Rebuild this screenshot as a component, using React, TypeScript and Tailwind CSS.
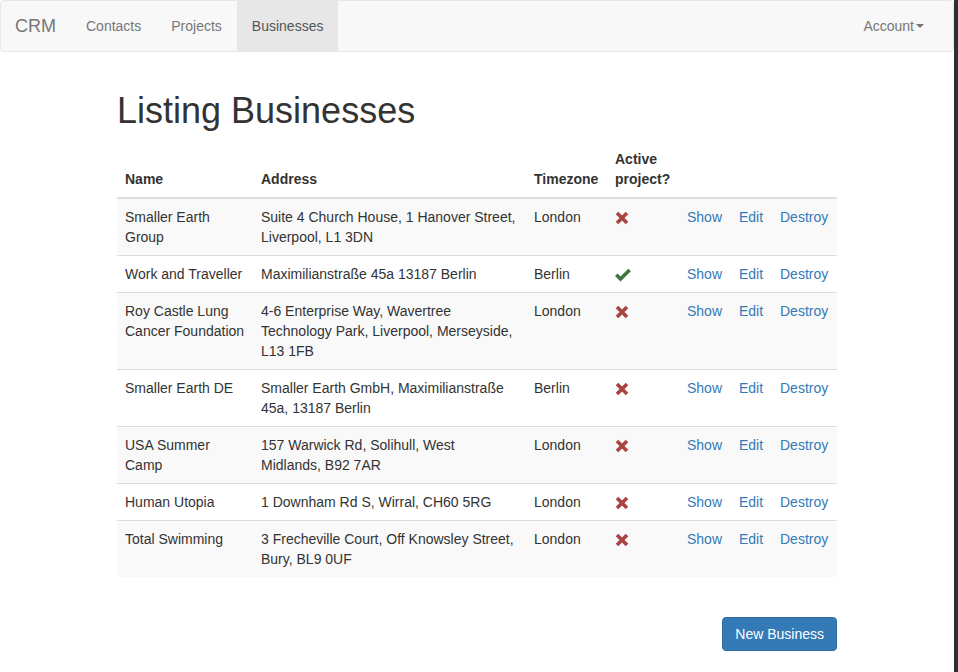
import React from "react";

const rows = [
  { name: "Smaller Earth Group", address: "Suite 4 Church House, 1 Hanover Street, Liverpool, L1 3DN", tz: "London", active: false },
  { name: "Work and Traveller", address: "Maximilianstraße 45a 13187 Berlin", tz: "Berlin", active: true },
  { name: "Roy Castle Lung Cancer Foundation", address: "4-6 Enterprise Way, Wavertree Technology Park, Liverpool, Merseyside, L13 1FB", tz: "London", active: false },
  { name: "Smaller Earth DE", address: "Smaller Earth GmbH, Maximilianstraße 45a, 13187 Berlin", tz: "Berlin", active: false },
  { name: "USA Summer Camp", address: "157 Warwick Rd, Solihull, West Midlands, B92 7AR", tz: "London", active: false },
  { name: "Human Utopia", address: "1 Downham Rd S, Wirral, CH60 5RG", tz: "London", active: false },
  { name: "Total Swimming", address: "3 Frecheville Court, Off Knowsley Street, Bury, BL9 0UF", tz: "London", active: false },
];

function RemoveIcon() {
  return (
    <svg width="14" height="14" viewBox="0 0 14 14" className="inline-block relative top-[3px]">
      <path d="M2 2 L12 12 M12 2 L2 12" stroke="#a94442" strokeWidth="3.6" strokeLinecap="butt" fill="none" />
    </svg>
  );
}

function OkIcon() {
  return (
    <svg width="16" height="14" viewBox="0 0 16 14" className="inline-block relative top-[3px]">
      <path d="M1.3 6.8 L5.5 11 L14.6 1.9" stroke="#3c763d" strokeWidth="3.6" strokeLinecap="butt" strokeLinejoin="miter" fill="none" />
    </svg>
  );
}

export default function App() {
  return (
    <div className="flex min-h-screen bg-white text-[14px] leading-[20px] text-[#333]" style={{ fontFamily: '"Liberation Sans", Arial, Helvetica, sans-serif' }}>
      <div className="w-[954px] shrink-0">
        <nav className="h-[52px] bg-[#f8f8f8] border border-[#e7e7e7] rounded-[4px] flex items-stretch">
          <a className="ml-[-1px] px-[15px] py-[15px] text-[18px] leading-[20px] text-[#777] h-[50px]">CRM</a>
          <a className="px-[15px] py-[15px] text-[#777] h-[50px]">Contacts</a>
          <a className="px-[15px] py-[15px] text-[#777] h-[50px]">Projects</a>
          <a className="px-[15px] py-[15px] text-[#555] bg-[#e7e7e7] h-[50px]">Businesses</a>
          <div className="flex-1" />
          <a className="px-[15px] py-[15px] text-[#777] h-[50px] mr-[14px] flex items-center">
            Account
            <span className="ml-[2px] inline-block w-0 h-0 border-t-[4px] border-t-[#777] border-x-[4px] border-x-transparent" />
          </a>
        </nav>

        <div className="w-[720px] mx-auto pt-[19px]">
          <h1 className="mt-[20px] mb-[10px] text-[36px] leading-[39.6px] font-normal text-[#333]">Listing Businesses</h1>

          <table className="w-[720px] table-fixed border-collapse mb-[20px]">
            <colgroup>
              <col className="w-[136px]" />
              <col className="w-[273px]" />
              <col className="w-[81px]" />
              <col className="w-[72px]" />
              <col className="w-[52px]" />
              <col className="w-[41px]" />
              <col className="w-[65px]" />
            </colgroup>
            <thead>
              <tr>
                <th className="p-[8px] text-left align-bottom font-bold border-b-2 border-[#ddd]">Name</th>
                <th className="p-[8px] text-left align-bottom font-bold border-b-2 border-[#ddd]">Address</th>
                <th className="p-[8px] text-left align-bottom font-bold border-b-2 border-[#ddd]">Timezone</th>
                <th className="p-[8px] text-left align-bottom font-bold border-b-2 border-[#ddd]">Active project?</th>
                <th className="p-[8px] border-b-2 border-[#ddd]"></th>
                <th className="p-[8px] border-b-2 border-[#ddd]"></th>
                <th className="p-[8px] border-b-2 border-[#ddd]"></th>
              </tr>
            </thead>
            <tbody>
              {rows.map((r, i) => (
                <tr key={i} className={i % 2 === 0 ? "bg-[#f9f9f9]" : "bg-white"}>
                  <td className={"p-[8px] align-top " + (i > 0 ? "border-t border-[#ddd]" : "")}>{r.name}</td>
                  <td className={"p-[8px] align-top " + (i > 0 ? "border-t border-[#ddd]" : "")}>{r.address}</td>
                  <td className={"p-[8px] align-top " + (i > 0 ? "border-t border-[#ddd]" : "")}>{r.tz}</td>
                  <td className={"p-[8px] align-top leading-[14px] " + (i > 0 ? "border-t border-[#ddd]" : "")}>{r.active ? <OkIcon /> : <RemoveIcon />}</td>
                  <td className={"p-[8px] align-top text-[#337ab7] " + (i > 0 ? "border-t border-[#ddd]" : "")}>Show</td>
                  <td className={"p-[8px] align-top text-[#337ab7] " + (i > 0 ? "border-t border-[#ddd]" : "")}>Edit</td>
                  <td className={"p-[8px] align-top text-[#337ab7] " + (i > 0 ? "border-t border-[#ddd]" : "")}>Destroy</td>
                </tr>
              ))}
            </tbody>
          </table>

          <div className="flex justify-end pt-[20px]">
            <button className="px-[12px] py-[6px] bg-[#337ab7] border border-[#2e6da4] rounded-[4px] text-white text-[14px] leading-[20px]">New Business</button>
          </div>
        </div>
      </div>
      <div className="w-[4px] bg-[#2b3034] shrink-0" />
    </div>
  );
}
